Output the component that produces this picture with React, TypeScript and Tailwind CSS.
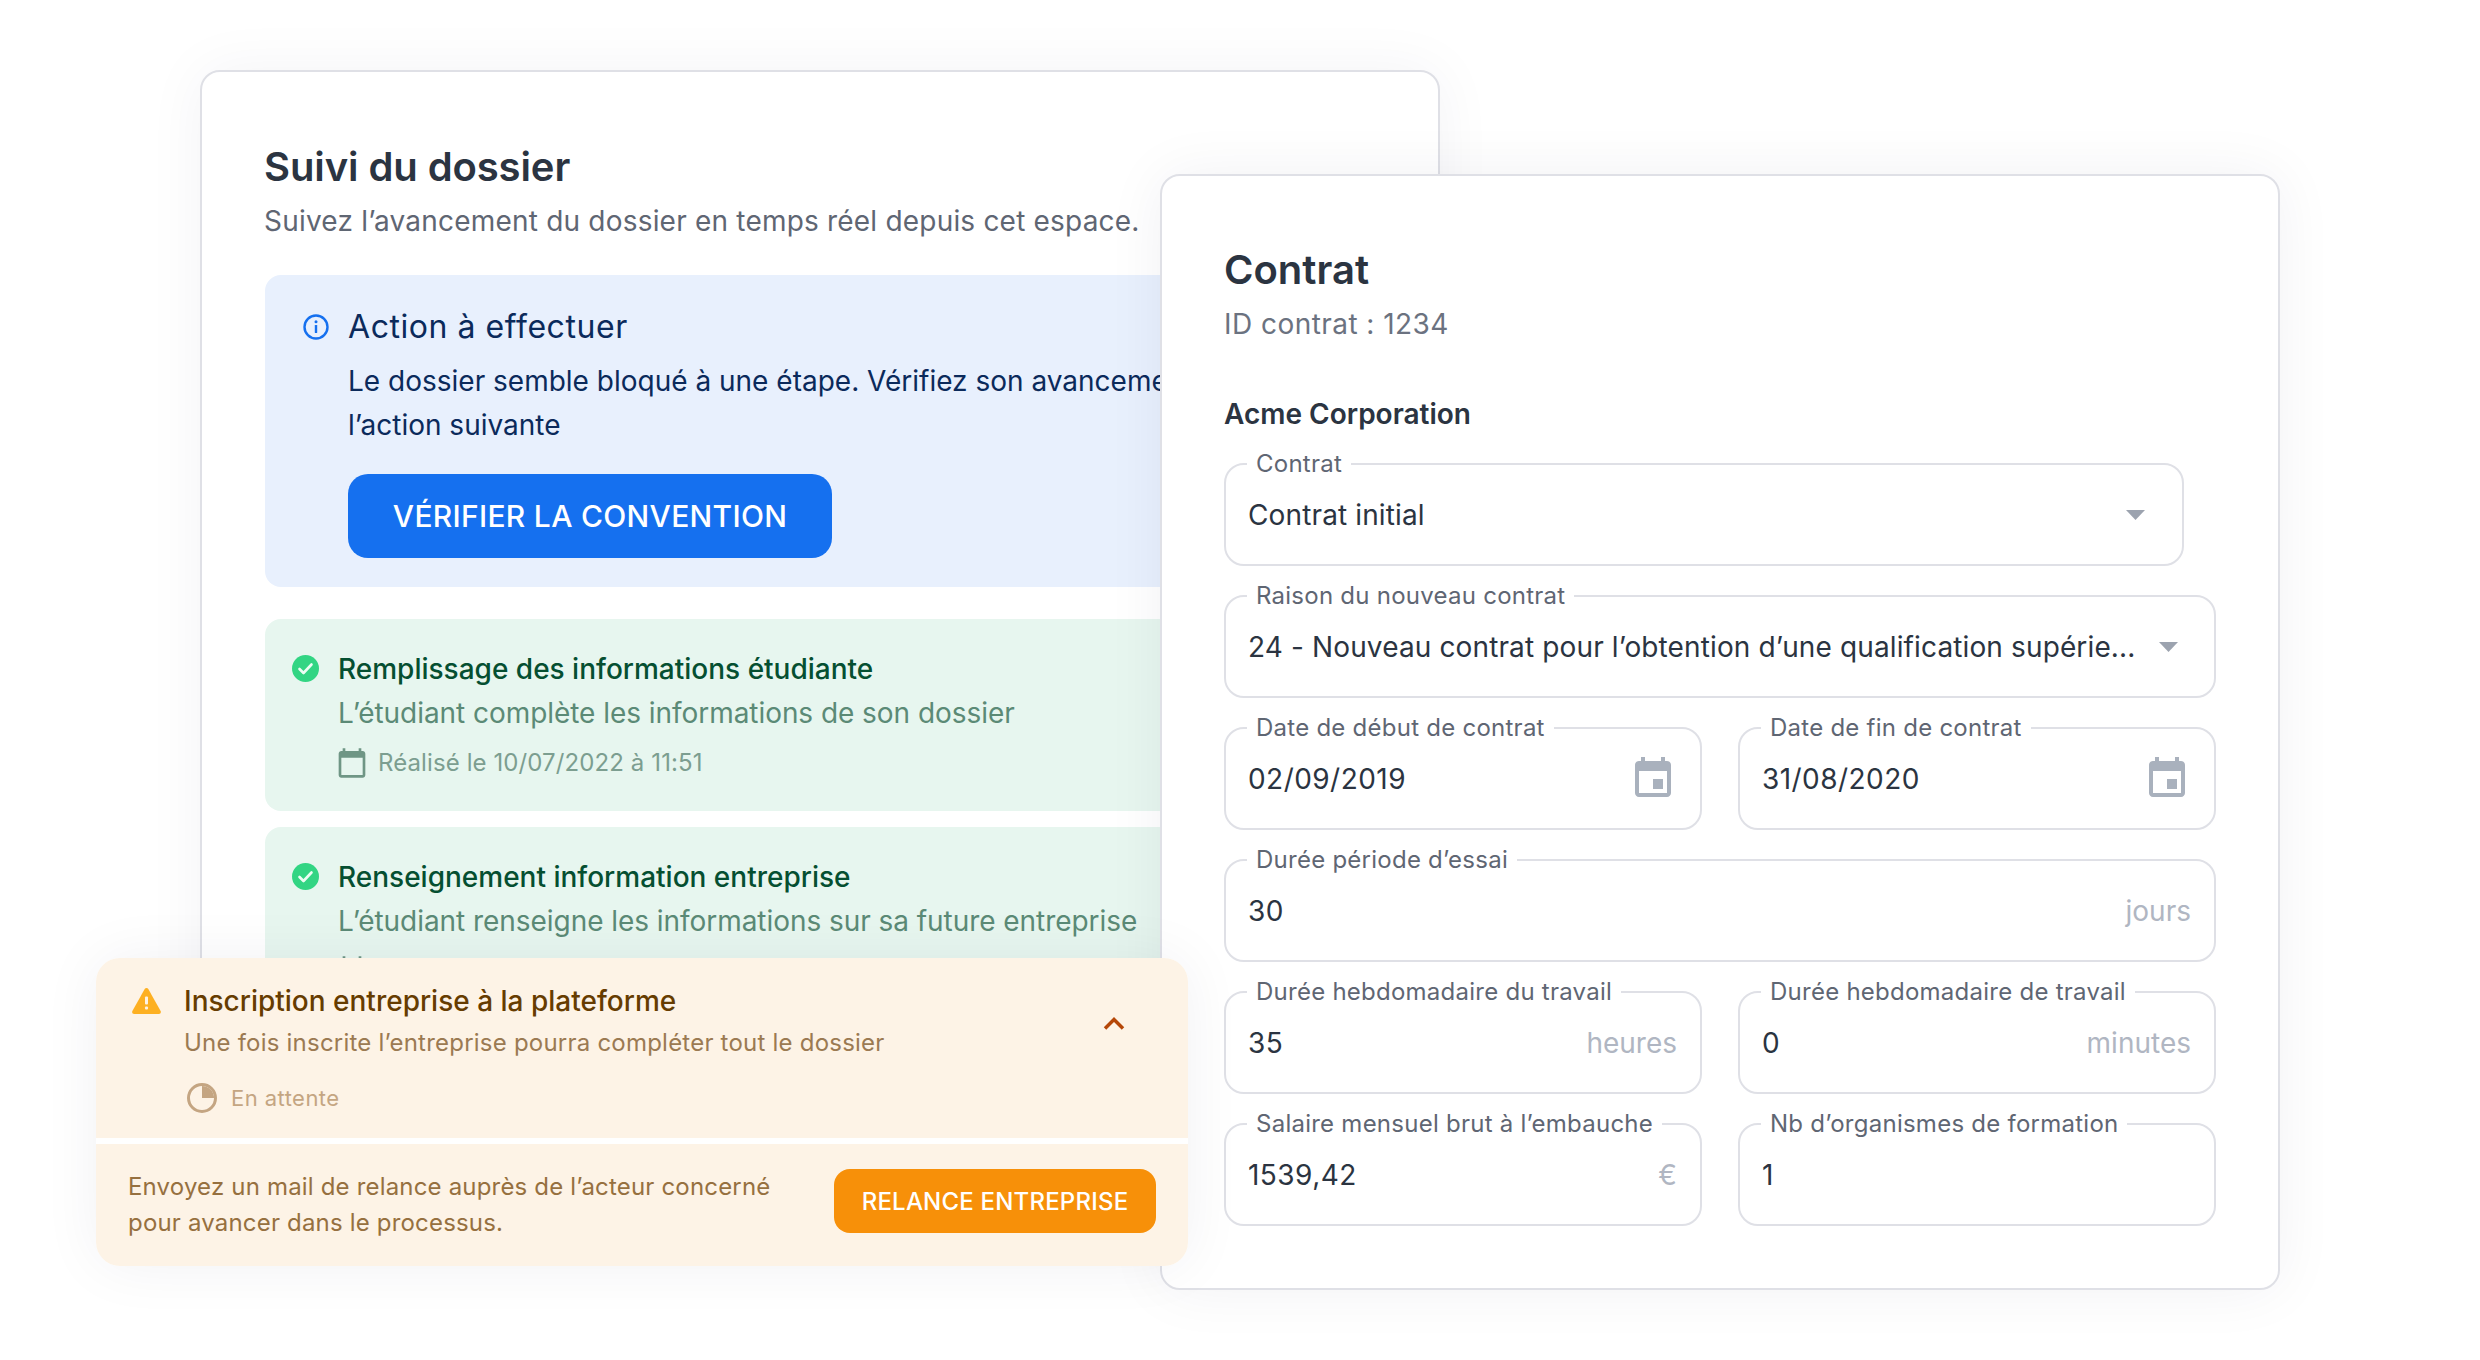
import type { ReactNode } from 'react'

function InfoIcon() {
  return (
    <svg viewBox="0 0 26 26" className="h-[26px] w-[26px] shrink-0" fill="none">
      <circle cx="13" cy="13" r="11.5" stroke="#1570EF" strokeWidth="2.4" />
      <rect x="11.8" y="11" width="2.4" height="8" rx="0.6" fill="#1570EF" />
      <circle cx="13" cy="7.8" r="1.5" fill="#1570EF" />
    </svg>
  )
}

function CheckIcon() {
  return (
    <svg viewBox="0 0 27 27" className="h-[27px] w-[27px] shrink-0" fill="none">
      <circle cx="13.5" cy="13.5" r="13.5" fill="#32D583" />
      <path d="M7.5 14l4 4 8-8.5" stroke="#ECFDF3" strokeWidth="2.6" strokeLinecap="round" strokeLinejoin="round" />
    </svg>
  )
}

function CalendarOutline() {
  return (
    <svg viewBox="0 0 24 24" className="-ml-[2px] h-[32px] w-[32px] shrink-0" fill="#6F9685">
      <path d="M20 3h-1V1h-2v2H7V1H5v2H4c-1.1 0-2 .9-2 2v16c0 1.1.9 2 2 2h16c1.1 0 2-.9 2-2V5c0-1.1-.9-2-2-2zm0 18H4V8h16v13z" />
    </svg>
  )
}

function CalendarEvent() {
  return (
    <svg viewBox="0 0 24 24" className="h-[48px] w-[48px] shrink-0" fill="#A9B1BD">
      <path d="M17 12h-5v5h5v-5zM16 1v2H8V1H6v2H5c-1.11 0-1.99.9-1.99 2L3 19c0 1.1.89 2 2 2h14c1.1 0 2-.9 2-2V5c0-1.1-.9-2-2-2h-1V1h-2zm3 18H5V8h14v11z" />
    </svg>
  )
}

function Caret() {
  return (
    <svg viewBox="0 0 19 10" className="h-[10px] w-[19px] shrink-0" fill="#9CA3AF">
      <path d="M0 0h19L9.5 10z" />
    </svg>
  )
}

function StepCard({ title, text, date }: { title: string; text: string; date: string }) {
  return (
    <div className="flex h-[192px] w-[1112px] shrink-0 gap-[19px] rounded-[16px] bg-[#E7F6EF] pl-[27px] pt-[36px]">
      <div>
        <CheckIcon />
      </div>
      <div>
        <p className="text-[28px] leading-[28px] font-medium text-[#054F31]">{title}</p>
        <p className="mt-[15px] text-[28px] leading-[30px] tracking-[-0.05px] text-[#5B8A76]">{text}</p>
        <div className="mt-[19px] flex items-center gap-[10px]">
          <CalendarOutline />
          <span className="text-[24px] leading-[30px] tracking-[0.1px] text-[#7C9E90]">{date}</span>
        </div>
      </div>
    </div>
  )
}

function Field({
  label,
  value,
  suffix,
  icon,
  numeric,
  className,
}: {
  label: string
  value: string
  suffix?: string
  icon?: ReactNode
  numeric?: boolean
  className?: string
}) {
  return (
    <div
      className={`relative flex h-[103px] items-center justify-between rounded-[20px] border-2 border-[#DFE0E6] pl-[22px] pr-[23px] ${className ?? ''}`}
    >
      <span className="absolute left-[21px] top-[-15px] bg-white px-[9px] text-[24px] leading-[28px] tracking-[0.25px] text-[#5F6673]">
        {label}
      </span>
      <span className={`text-[28px] text-[#2B3441] ${numeric ? 'tracking-[0.45px]' : 'tracking-[0.13px]'}`}>{value}</span>
      {suffix ? <span className="text-[28px] text-[#B0B6C2]">{suffix}</span> : null}
      {icon}
    </div>
  )
}

export default function App() {
  return (
    <div className="relative h-[1360px] w-[2480px] overflow-hidden bg-white [font-family:Inter,sans-serif]">
      {/* Suivi du dossier */}
      <div className="absolute left-[200px] top-[70px] h-[1100px] w-[1240px] overflow-hidden rounded-[20px] border-2 border-[#DFE0E6] bg-white pl-[63px] pt-[71px] shadow-[0_0_60px_rgba(30,40,70,0.05)]">
        <h1 className="-ml-[1px] text-[40px] leading-[48px] font-semibold tracking-[-0.1px] text-[#2B3441]">Suivi du dossier</h1>
        <p className="-ml-[1px] mt-[8px] text-[28px] leading-[44px] tracking-[0.2px] text-[#5F6673]">
          Suivez l’avancement du dossier en temps réel depuis cet espace.
        </p>
        <div className="mt-[32px] flex h-[312px] w-[1112px] gap-[19px] rounded-[16px] bg-[#E8F0FD] pl-[38px] pt-[39px]">
          <div>
            <InfoIcon />
          </div>
          <div>
            <p className="text-[32px] leading-[26px] tracking-[0.55px] text-[#0B2A5B]">Action à effectuer</p>
            <p className="mt-[19px] whitespace-nowrap text-[28px] leading-[44px] text-[#0B2A5B]">
              Le dossier semble bloqué à une étape. Vérifiez son avancement pour réaliser
              <br />
              l’action suivante
            </p>
            <button className="mt-[27px] h-[84px] w-[484px] rounded-[20px] bg-[#1570EF] text-[30px] font-medium tracking-[0.3px] text-white">
              VÉRIFIER LA CONVENTION
            </button>
          </div>
        </div>
        <div className="mt-[32px] flex flex-col gap-[16px]">
          <StepCard
            title="Remplissage des informations étudiante"
            text="L’étudiant complète les informations de son dossier"
            date="Réalisé le 10/07/2022 à 11:51"
          />
          <StepCard
            title="Renseignement information entreprise"
            text="L’étudiant renseigne les informations sur sa future entreprise"
            date="Réalisé le 10/07/2022 à 11:51"
          />
        </div>
      </div>

      {/* Contrat */}
      <div className="absolute left-[1160px] top-[174px] h-[1116px] w-[1120px] rounded-[20px] border-2 border-[#DFE0E6] bg-white pl-[62px] pt-[70px] shadow-[0_0_60px_rgba(30,40,70,0.06)]">
        <h2 className="text-[40px] leading-[48px] font-semibold text-[#2B3441]">Contrat</h2>
        <p className="mt-[8px] text-[28px] leading-[44px] tracking-[0.45px] text-[#6B7280]">ID contrat : 1234</p>
        <p className="mt-[46px] text-[28px] leading-[44px] font-semibold text-[#2B3441]">Acme Corporation</p>
        <div className="mt-[27px] grid w-[992px] grid-cols-2 gap-x-[36px] gap-y-[29px]">
          <Field label="Contrat" value="Contrat initial" icon={<Caret />} className="col-span-2 mr-[32px] pr-[37px]" />
          <Field
            label="Raison du nouveau contrat"
            value="24 - Nouveau contrat pour l’obtention d’une qualification supérie..."
            icon={<Caret />}
            className="col-span-2 pr-[36px]"
          />
          <Field label="Date de début de contrat" value="02/09/2019" numeric icon={<CalendarEvent />} className="pr-[18px]" />
          <Field label="Date de fin de contrat" value="31/08/2020" numeric icon={<CalendarEvent />} className="pr-[18px]" />
          <Field label="Durée période d’essai" value="30" numeric suffix="jours" className="col-span-2" />
          <Field label="Durée hebdomadaire du travail" value="35" numeric suffix="heures" />
          <Field label="Durée hebdomadaire de travail" value="0" numeric suffix="minutes" />
          <Field label="Salaire mensuel brut à l’embauche" value="1539,42" numeric suffix="€" />
          <Field label="Nb d’organismes de formation" value="1" numeric />
        </div>
      </div>

      {/* Inscription entreprise */}
      <div className="absolute left-[96px] top-[958px] flex h-[308px] w-[1092px] flex-col overflow-hidden rounded-[24px] shadow-[0_0_60px_rgba(30,40,70,0.06)]">
        <div className="relative flex h-[180px] shrink-0 gap-[23px] bg-[#FDF3E6] pl-[36px] pt-[30px]">
          <svg viewBox="0 0 29 26" className="h-[26px] w-[29px] shrink-0" fill="#FDB022">
            <path d="M14.5 0c.8 0 1.4.4 1.8 1l12.3 22c.7 1.3-.1 3-1.700 3H2.100C.5 26-.3 24.300.4 23L12.700 1c.4-.6 1-1 1.800-1z" />
            <rect x="13" y="8.500" width="3" height="8" rx="1" fill="#FDF3E6" />
            <rect x="13" y="18.500" width="3" height="3" rx="1" fill="#FDF3E6" />
          </svg>
          <div>
            <p className="text-[28px] leading-[26px] font-medium text-[#663C00]">Inscription entreprise à la plateforme</p>
            <p className="mt-[14px] text-[24px] leading-[30px] tracking-[0.22px] text-[#9B7A52]">
              Une fois inscrite l’entreprise pourra compléter tout le dossier
            </p>
            <div className="mt-[25px] flex items-center gap-[14px] pl-[3px]">
              <svg viewBox="0 0 30 30" className="h-[30px] w-[30px] shrink-0" fill="none">
                <circle cx="15" cy="15" r="13.500" stroke="#C4A582" strokeWidth="3" />
                <path d="M15 3v12h12A12 12 0 0 0 15 3z" fill="#C4A582" />
              </svg>
              <span className="text-[22px] leading-[30px] tracking-[0.45px] text-[#C4A582]">En attente</span>
            </div>
          </div>
          <svg viewBox="0 0 22 13" className="absolute right-[63px] top-[59px] h-[13px] w-[22px]" fill="none">
            <path d="M2 11.500 11 2.500l9 9" stroke="#B54708" strokeWidth="3.500" />
          </svg>
        </div>
        <div className="h-[6px] shrink-0 bg-white" />
        <div className="flex flex-1 items-center justify-between bg-[#FDF3E6] pl-[32px] pr-[32px]">
          <p className="w-[680px] text-[24px] leading-[36px] tracking-[0.18px] text-[#96703F]">
            Envoyez un mail de relance auprès de l’acteur concerné pour avancer dans le processus.
          </p>
          <button className="mb-[8px] h-[64px] w-[322px] rounded-[16px] bg-[#F79009] pt-[2px] text-[24px] font-medium tracking-[0.2px] text-white">
            RELANCE ENTREPRISE
          </button>
        </div>
      </div>
    </div>
  )
}
